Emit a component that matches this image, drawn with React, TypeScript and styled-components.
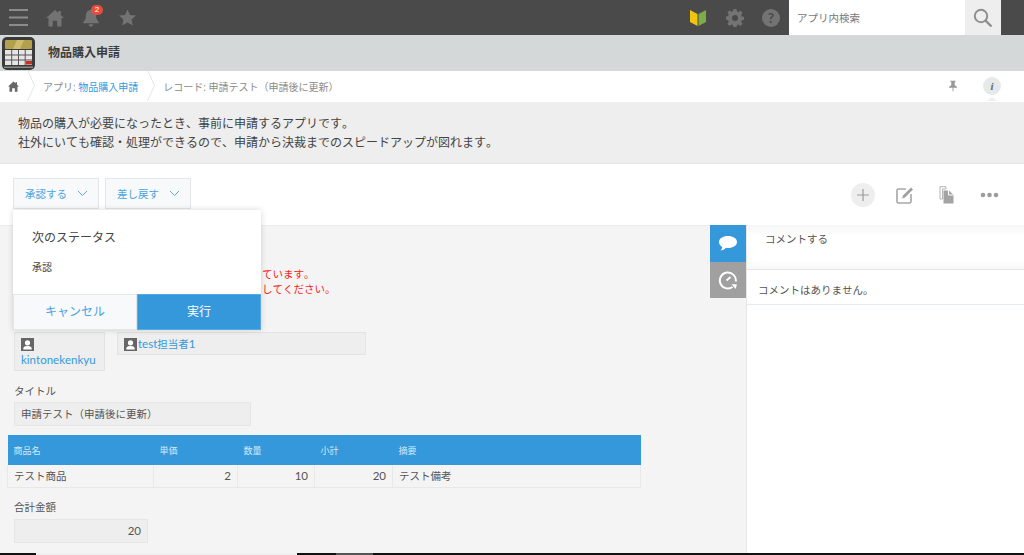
import React from 'react';
import styled, { createGlobalStyle } from 'styled-components';

const GlobalStyle = createGlobalStyle`
  html, body {
    margin: 0;
    padding: 0;
    background: #ffffff;
  }
  body {
    font-family: "Open Sans", "Noto Sans CJK JP", sans-serif;
    font-kerning: none;
    text-spacing-trim: space-all;
    color: #555555;
    overflow: hidden;
  }
  * {
    box-sizing: border-box;
  }
`;

const Page = styled.div`
  display: flex;
  flex-direction: column;
  height: 555px;
  overflow: hidden;
  position: relative;
  width: 1024px;
`;

const TopBar = styled.header`
  align-items: center;
  background: #4a4a4a;
  display: flex;
  flex: 0 0 35px;
  padding-left: 9px;
`;

const TopIcon = styled.button<{ $gap?: number }>`
  background: none;
  border: 0;
  display: flex;
  margin-left: ${p => p.$gap ?? 0}px;
  padding: 0;
  position: relative;
`;

const Badge = styled.span`
  background: #e74c3c;
  border-radius: 6px;
  color: #ffffff;
  font-size: 8px;
  height: 10px;
  left: 9px;
  line-height: 10px;
  position: absolute;
  text-align: center;
  top: -3px;
  width: 12px;
`;

const TopRight = styled.div`
  align-items: center;
  display: flex;
  margin-left: auto;
`;

const SearchBox = styled.div`
  align-items: stretch;
  background: #ffffff;
  display: flex;
  height: 35px;
  margin-left: 9px;
  margin-right: 23px;
  width: 212px;
`;

const SearchText = styled.div`
  align-items: center;
  color: #777777;
  display: flex;
  flex: 1;
  font-size: 10.5px;
  padding-left: 8px;
`;

const SearchButton = styled.div`
  align-items: center;
  background: #eeeeee;
  display: flex;
  justify-content: center;
  width: 36px;
`;

const AppBar = styled.div`
  align-items: center;
  background: #d4d8d9;
  display: flex;
  flex: 0 0 36px;
  padding-left: 2px;
`;

const AppTitle = styled.h1`
  color: #3c3c3c;
  font-size: 12px;
  font-weight: 700;
  margin: -3px 0 0 13px;
`;

const Crumbs = styled.nav`
  align-items: center;
  background: #ffffff;
  display: flex;
  flex: 0 0 31px;
  font-size: 10px;
  color: #8a8a8a;
  padding: 0 0 1px 8px;
  position: relative;
`;

const CrumbSep = styled.svg<{ $first?: boolean }>`
  flex: none;
  margin: -1px 8px 0 ${p => (p.$first ? 8 : 9)}px;
`;

const Link = styled.span`
  color: #3498db;
`;

const CrumbRight = styled.div`
  align-items: center;
  display: flex;
  margin-left: auto;
  padding-right: 23px;
`;

const InfoDot = styled.div`
  align-items: center;
  background: #e4e9ea;
  border-radius: 50%;
  color: #666666;
  display: flex;
  font-family: "Liberation Serif", serif;
  font-size: 11px;
  font-style: italic;
  font-weight: 700;
  height: 18px;
  justify-content: center;
  margin-left: 26px;
  position: relative;
  width: 18px;

  &::after {
    border-bottom: 4px solid #eeeeee;
    border-left: 5px solid transparent;
    border-right: 5px solid transparent;
    bottom: -6px;
    content: "";
    left: 4px;
    position: absolute;
  }
`;

const Description = styled.section`
  background: #eeeeee;
  border-bottom: 1px solid #e6e6e6;
  color: #444444;
  flex: 0 0 62px;
  font-size: 12px;
  line-height: 19px;
  padding: 12px 18px 0;
`;

const Toolbar = styled.div`
  align-items: center;
  background: #ffffff;
  display: flex;
  flex: 0 0 61px;
  gap: 6px;
  padding: 0 25px 0 13px;
`;

const ActionButton = styled.button`
  align-items: center;
  background: #f7f9fa;
  border: 1px solid #e3e7e8;
  color: #4aa3e0;
  display: flex;
  font-family: inherit;
  font-size: 10.5px;
  height: 31px;
  justify-content: space-between;
  margin-top: -2px;
  padding: 0 10px 0 11px;
  width: 86px;
`;

const ToolIcons = styled.div`
  align-items: center;
  display: flex;
  gap: 25px;
  margin-left: auto;
`;

const PlusCircle = styled.div`
  align-items: center;
  background: #eeeeee;
  border-radius: 50%;
  display: flex;
  height: 24px;
  justify-content: center;
  margin-right: -4px;
  width: 24px;
`;

const Body = styled.div`
  display: flex;
  flex: 1;
  min-height: 0;
`;

const Main = styled.main`
  background: #f4f4f4;
  border-top: 1px solid #ececec;
  flex: 0 0 710px;
  padding: 41px 0 0 14px;
`;

const Notice = styled.p`
  color: #ff2020;
  font-size: 10.5px;
  line-height: 15px;
  margin: 0 0 35px;
  padding-left: 248px;
`;

const UserRow = styled.div`
  align-items: flex-start;
  display: flex;
  gap: 12px;
`;

const UserField = styled.div<{ $width: number }>`
  background: #eeeeee;
  border: 1px solid #e3e3e3;
  color: #3498db;
  font-size: 10.5px;
  line-height: 16px;
  padding: 3px 6px 2px;
  width: ${p => p.$width}px;
`;

const UserIcon = styled.svg`
  display: inline-block;
  margin-right: 1px;
  vertical-align: -3px;
`;

const Latin = styled.span`
  font-family: Lato, sans-serif;
  font-size: 11.5px;
`;

const FieldLabel = styled.div<{ $tight?: boolean }>`
  color: #555555;
  font-size: 10.5px;
  line-height: 14px;
  margin-top: ${p => (p.$tight ? 12 : 13)}px;
`;

const ValueBox = styled.div<{ $width: number; $right?: boolean; $gap?: number }>`
  background: #eeeeee;
  border: 1px solid #e6e6e6;
  color: #555555;
  font-size: 10.5px;
  height: 24px;
  line-height: 22px;
  margin-top: ${p => p.$gap ?? 4}px;
  padding: 0 6px;
  text-align: ${p => (p.$right ? 'right' : 'left')};
  width: ${p => p.$width}px;
`;

const Table = styled.table`
  border-collapse: collapse;
  margin: 9px 0 11px -7px;
  table-layout: fixed;
  width: 634px;
`;

const Th = styled.th<{ $width?: number }>`
  background: #3498db;
  color: #d5e9f7;
  font-size: 9px;
  font-weight: 400;
  height: 30px;
  padding: 0 6px;
  text-align: left;
  width: ${p => (p.$width ? `${p.$width}px` : 'auto')};
`;

const Td = styled.td<{ $right?: boolean }>`
  border: 1px solid #e8e8e8;
  border-top: 0;
  color: #555555;
  font-size: 10.5px;
  height: 22px;
  padding: 0 6px;
  text-align: ${p => (p.$right ? 'right' : 'left')};
`;

const TabRail = styled.div`
  background: #f4f4f4;
  border-top: 1px solid #ececec;
  display: flex;
  flex: 0 0 36px;
  flex-direction: column;
`;

const Tab = styled.div<{ $active?: boolean }>`
  align-items: center;
  background: ${p => (p.$active ? '#3498db' : '#a0a0a0')};
  display: flex;
  height: ${p => (p.$active ? 37 : 36)}px;
  justify-content: center;
  margin-top: ${p => (p.$active ? -1 : 0)}px;
`;

const Side = styled.aside`
  background: #ffffff;
  border-left: 1px solid #e6e6e6;
  display: flex;
  flex: 1;
  flex-direction: column;
`;

const CommentInput = styled.div`
  background: linear-gradient(#f6f6f6, #ffffff 12px, #ffffff 34px, #f8f8f8);
  border-bottom: 1px solid #e6e6e6;
  color: #555555;
  font-size: 10.5px;
  height: 45px;
  padding: 6px 18px;
`;

const NoComment = styled.div`
  border-bottom: 1px solid #e3ecee;
  color: #555555;
  font-size: 10.5px;
  height: 35px;
  line-height: 40px;
  padding-left: 11px;
`;

const Popover = styled.div`
  background: #ffffff;
  box-shadow: 0 0 6px rgba(0, 0, 0, 0.16);
  display: flex;
  flex-direction: column;
  height: 120px;
  left: 13px;
  position: absolute;
  top: 210px;
  width: 248px;
`;

const PopBody = styled.div`
  flex: 1;
  padding: 18px 19px 0;
`;

const PopTitle = styled.div`
  color: #444444;
  font-size: 12px;
  line-height: 20px;
`;

const PopStatus = styled.div`
  color: #444444;
  font-size: 10px;
  line-height: 14px;
  margin-top: 12px;
`;

const PopActions = styled.div`
  display: flex;
  height: 36px;
`;

const PopButton = styled.button<{ $primary?: boolean }>`
  background: ${p => (p.$primary ? '#3498db' : '#f7f9fa')};
  border: 1px solid ${p => (p.$primary ? '#5aaae2' : '#e3e7e8')};
  color: ${p => (p.$primary ? '#ffffff' : '#4aa3e0')};
  flex: ${p => (p.$primary ? '0 0 124px' : '1')};
  font-family: inherit;
  font-size: 12px;
  padding: 0 0 2px;
`;

const BottomStrip = styled.div`
  background: #f4f4f4;
  bottom: 0;
  display: flex;
  height: 2px;
  left: 0;
  position: absolute;
  width: 1024px;
`;

const StripPart = styled.span<{ $width: number; $color: string }>`
  background: ${p => p.$color};
  flex: 0 0 ${p => p.$width}px;
`;

const Sep = ({ first }: { first?: boolean }) => (
  <CrumbSep $first={first} width="8" height="31" viewBox="0 0 8 31">
    <path d="M0.5 0 L7.500 15.500 L0.500 31" fill="none" stroke="#e2e6e7" />
  </CrumbSep>
);

const Person = () => (
  <UserIcon width="13" height="13" viewBox="0 0 13 13">
    <rect width="13" height="13" fill="#666666" />
    <circle cx="6.500" cy="4.800" r="2.600" fill="#ffffff" />
    <path d="M2.200 11.500 C2.200 8.600 4 8 6.500 8 S10.800 8.600 10.800 11.500Z" fill="#ffffff" />
  </UserIcon>
);

const Chevron = () => (
  <svg width="11" height="7" viewBox="0 0 11 7">
    <path d="M1 1l4.500 4.500L10 1" fill="none" stroke="#5aaae2" />
  </svg>
);

export default function App() {
  return (
    <Page>
      <GlobalStyle />
      <TopBar>
        <TopIcon>
          <svg width="19" height="19" viewBox="0 0 19 19">
            <path d="M0 2h19M0 9.500h19M0 17h19" stroke="#8c8c8c" strokeWidth="2.200" />
          </svg>
        </TopIcon>
        <TopIcon $gap={18}>
          <svg width="18" height="18" viewBox="0 0 19 18">
            <path d="M9.500 0.500 L13 3.600V1.500h2.600v4.400L19 9h-2.600v9h-4.600v-6H7.200v6H2.600V9H0z" fill="#737373" />
          </svg>
        </TopIcon>
        <TopIcon $gap={18}>
          <svg width="18" height="20" viewBox="0 0 19 20">
            <path d="M9.500 1.500c3.600 0 5.400 2.600 5.400 6 0 3.600 1.200 5 2.800 6.800v1.200H1.300v-1.200C2.900 12.500 4.100 11.100 4.100 7.500c0-3.400 1.800-6 5.400-6zM7 16.500h5c0 1.500-1 2.500-2.500 2.500S7 18 7 16.500z" fill="#737373" />
          </svg>
          <Badge>2</Badge>
        </TopIcon>
        <TopIcon $gap={19}>
          <svg width="17" height="17" viewBox="0 0 18 17">
            <path d="M9 0l2.700 5.800 6.300.7-4.700 4.200 1.300 6.300L9 13.800 3.400 17l1.300-6.300L0 6.500l6.300-.7z" fill="#737373" />
          </svg>
        </TopIcon>
        <TopRight>
          <TopIcon>
            <svg width="16" height="18" viewBox="0 0 16 18">
              <path d="M0 1l7.500 4v12L0 13z" fill="#f1c40f" />
              <path d="M16 1L8.500 5v12L16 13z" fill="#7dab45" />
            </svg>
          </TopIcon>
          <TopIcon $gap={20}>
            <svg width="18" height="18" viewBox="0 0 18 18">
              <path fillRule="evenodd" d="M7.500 0h3l.4 2.400 1.600.7 2-1.400 2.100 2.100-1.400 2 .7 1.600 2.400.4v3l-2.400.4-.7 1.600 1.400 2-2.100 2.100-2-1.400-1.600.7-.4 2.400h-3l-.4-2.400-1.600-.7-2 1.400-2.100-2.100 1.400-2-.7-1.600L-.3 10.500v-3l2.400-.4.7-1.600-1.400-2 2.100-2.100 2 1.400 1.600-.7zM9 6a3 3 0 100 6 3 3 0 000-6z" fill="#737373" />
            </svg>
          </TopIcon>
          <TopIcon $gap={18}>
            <svg width="18" height="18" viewBox="0 0 18 18">
              <circle cx="9" cy="9" r="9" fill="#737373" />
              <text x="9" y="14" textAnchor="middle" fontSize="14" fontWeight="700" fontFamily="Lato, sans-serif" fill="#4a4a4a">?</text>
            </svg>
          </TopIcon>
          <SearchBox>
            <SearchText>アプリ内検索</SearchText>
            <SearchButton>
              <svg width="20" height="20" viewBox="0 0 20 20">
                <circle cx="8" cy="8" r="6.200" fill="none" stroke="#8f8f8f" strokeWidth="2" />
                <path d="M12.600 12.600L18.500 18.500" stroke="#8f8f8f" strokeWidth="2.400" />
              </svg>
            </SearchButton>
          </SearchBox>
        </TopRight>
      </TopBar>

      <AppBar>
        <svg width="33" height="33" viewBox="0 0 33 33">
          <rect width="33" height="33" rx="5" fill="#3a3a3a" />
          <rect x="3" y="3" width="27" height="9" rx="1" fill="#b3a04c" />
          <path d="M15 3h7l-4 9h-7z" fill="#cfbd6c" />
          <rect x="3" y="13" width="27" height="15" fill="#e6e6e6" />
          <path d="M3 18h27M3 23h27M9.700 13v15M16.500 13v15M23.200 13v15" stroke="#555555" strokeWidth="1" />
          <rect x="24" y="24" width="6" height="3.500" fill="#c9301f" />
          <rect x="2" y="29.500" width="29" height="1.500" fill="#8a8a8a" />
        </svg>
        <AppTitle>物品購入申請</AppTitle>
      </AppBar>

      <Crumbs>
        <svg width="11" height="11" viewBox="0 0 19 18">
          <path d="M9.500 0.500 L13 3.600V1.500h2.600v4.400L19 9h-2.600v9h-4.600v-6H7.200v6H2.600V9H0z" fill="#666666" />
        </svg>
        <Sep first />
        <span>アプリ: <Link>物品購入申請</Link></span>
        <Sep />
        <span>レコード: 申請テスト（申請後に更新）</span>
        <CrumbRight>
          <svg width="8" height="12" viewBox="0 0 9 12">
            <path d="M1.500 0h6v1.200H6.400v3.800L9 7v1H5v4H4V8H0V7l2.600-2V1.200H1.500z" fill="#999999" />
          </svg>
          <InfoDot>i</InfoDot>
        </CrumbRight>
      </Crumbs>

      <Description>
        物品の購入が必要になったとき、事前に申請するアプリです。
        <br />
        社外にいても確認・処理ができるので、申請から決裁までのスピードアップが図れます。
      </Description>

      <Toolbar>
        <ActionButton>
          承認する
          <Chevron />
        </ActionButton>
        <ActionButton>
          差し戻す
          <Chevron />
        </ActionButton>
        <ToolIcons>
          <PlusCircle>
            <svg width="12" height="12" viewBox="0 0 12 12">
              <path d="M6 0v12M0 6h12" stroke="#9a9a9a" strokeWidth="1.200" />
            </svg>
          </PlusCircle>
          <svg width="18" height="18" viewBox="0 0 18 18">
            <path d="M10 3H2.500A1.500 1.500 0 001 4.500v11A1.500 1.500 0 002.500 17h11a1.500 1.500 0 001.500-1.500V8" fill="none" stroke="#a6a6a6" strokeWidth="1.600" />
            <path d="M6 12.500l1-3L15 1.500l2 2-8 8z" fill="#a0a0a0" />
          </svg>
          <svg width="16" height="18" viewBox="0 0 16 18">
            <path d="M1 .7h6v2.300H3.500v10H1z" fill="none" stroke="#b5b5b5" />
            <path d="M4.500 4.500h5.500l4.500 4.500v8.500h-10z" fill="#a3a3a3" />
            <path d="M9.500 4v5h5" fill="none" stroke="#ffffff" />
          </svg>
          <svg width="19" height="6" viewBox="0 0 19 6">
            <circle cx="3" cy="3" r="2.300" fill="#9c9c9c" />
            <circle cx="9.500" cy="3" r="2.300" fill="#9c9c9c" />
            <circle cx="16" cy="3" r="2.300" fill="#9c9c9c" />
          </svg>
        </ToolIcons>
      </Toolbar>

      <Body>
        <Main>
          <Notice>
            ています。
            <br />
            してください。
          </Notice>
          <UserRow>
            <UserField $width={91}>
              <Person />
              <br />
              <Latin>kintonekenkyu</Latin>
            </UserField>
            <UserField $width={249}>
              <Person />
              <Latin>test</Latin>担当者<Latin>1</Latin>
            </UserField>
          </UserRow>
          <FieldLabel>タイトル</FieldLabel>
          <ValueBox $width={237}>申請テスト（申請後に更新）</ValueBox>
          <Table>
            <thead>
              <tr>
                <Th $width={146}>商品名</Th>
                <Th $width={84}>単価</Th>
                <Th $width={77}>数量</Th>
                <Th $width={78}>小計</Th>
                <Th>摘要</Th>
              </tr>
            </thead>
            <tbody>
              <tr>
                <Td>テスト商品</Td>
                <Td $right><Latin>2</Latin></Td>
                <Td $right><Latin>10</Latin></Td>
                <Td $right><Latin>20</Latin></Td>
                <Td>テスト備考</Td>
              </tr>
            </tbody>
          </Table>
          <FieldLabel $tight>合計金額</FieldLabel>
          <ValueBox $width={134} $right $gap={5}><Latin>20</Latin></ValueBox>
        </Main>
        <TabRail>
          <Tab $active>
            <svg width="20" height="17" viewBox="0 0 20 17">
              <path d="M10 1c5 0 9 2.500 9 6s-4 6-9 6c-.8 0-1.500 0-2.200-.2C6.500 14.500 4.500 15.500 2.500 15.500c1-1 1.600-2.200 1.700-3.600C2.200 10.800 1 9 1 7c0-3.500 4-6 9-6z" fill="#ffffff" />
            </svg>
          </Tab>
          <Tab>
            <svg width="20" height="20" viewBox="0 0 20 20">
              <path d="M14.500 17A8 8 0 1117.800 11.500" fill="none" stroke="#ffffff" strokeWidth="2" />
              <path d="M13.500 14l5.500.5-1.500 4.500z" fill="#ffffff" />
              <path d="M8.500 10.500l4-3.500" stroke="#ffffff" strokeWidth="1.800" />
            </svg>
          </Tab>
        </TabRail>
        <Side>
          <CommentInput>コメントする</CommentInput>
          <NoComment>コメントはありません。</NoComment>
        </Side>
      </Body>

      <Popover>
        <PopBody>
          <PopTitle>次のステータス</PopTitle>
          <PopStatus>承認</PopStatus>
        </PopBody>
        <PopActions>
          <PopButton>キャンセル</PopButton>
          <PopButton $primary>実行</PopButton>
        </PopActions>
      </Popover>

      <BottomStrip>
        <StripPart $width={36} $color="#111111" />
        <StripPart $width={261} $color="#f0f0f0" />
        <StripPart $width={39} $color="#111111" />
        <StripPart $width={37} $color="#555555" />
        <StripPart $width={651} $color="#111111" />
      </BottomStrip>
    </Page>
  );
}
